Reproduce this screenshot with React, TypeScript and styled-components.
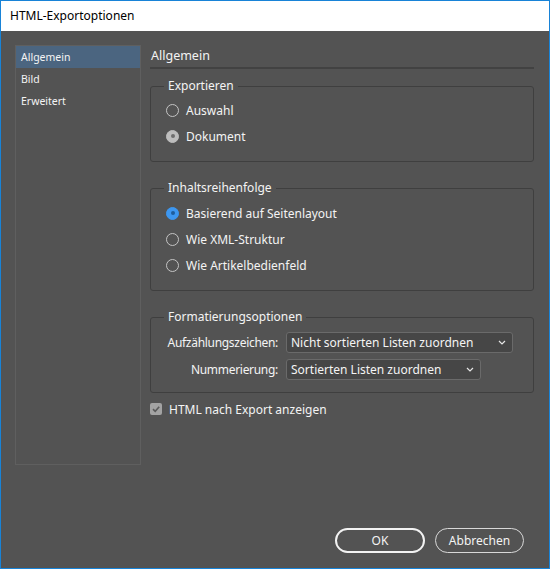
import React from "react";
import styled, { createGlobalStyle } from "styled-components";

const Global = createGlobalStyle`
  html, body { margin: 0; padding: 0; background: #ffffff; }
  * { box-sizing: border-box; }
`;

const FONT = `"Noto Sans", "Open Sans", Arial, sans-serif`;

const Window = styled.div`
  width: 550px;
  height: 569px;
  border: 1px solid #1883d7;
  display: flex;
  flex-direction: column;
  font-family: ${FONT};
`;

const TitleBar = styled.div`
  height: 30px;
  flex: none;
  background: #ffffff;
  color: #000000;
  font-size: 12px;
  display: flex;
  align-items: center;
  padding-left: 9px;
  padding-bottom: 2px;
`;

const Body = styled.div`
  flex: 1;
  background: #535353;
  padding: 14px 15px 15px 14px;
  display: flex;
  flex-direction: column;
  color: #f0f0f0;
`;

const Content = styled.div`
  display: flex;
  gap: 9px;
  flex: 1;
  align-items: flex-start;
`;

const Sidebar = styled.div`
  width: 126px;
  height: 420px;
  border: 1px solid #5f5f5f;
  display: flex;
  flex-direction: column;
`;

const NavItem = styled.div<{ $active?: boolean }>`
  height: 22px;
  display: flex;
  align-items: center;
  padding-left: 5px;
  font-size: 10.5px;
  color: #f4f4f4;
  background: ${(p) => (p.$active ? "#4b6580" : "transparent")};
`;

const Main = styled.div`
  flex: 1;
  display: flex;
  flex-direction: column;
`;

const Heading = styled.div`
  height: 24px;
  display: flex;
  align-items: center;
  padding-left: 1px;
  padding-bottom: 2px;
  font-size: 12.5px;
  color: #f4f4f4;
  border-bottom: 2px solid #424242;
`;

const Group = styled.fieldset<{ $mt: number; $h: number }>`
  margin: ${(p) => p.$mt}px 0 0 0;
  height: ${(p) => p.$h}px;
  border: 1px solid #3f3f3f;
  border-radius: 3px;
  padding: 0 14px 0 15px;
  min-width: 0;
`;

const Legend = styled.legend`
  font-size: 12px;
  color: #f4f4f4;
  padding: 0 4px;
  margin-left: -2px;
  line-height: 16px;
`;

const OptionList = styled.div<{ $pt: number }>`
  display: flex;
  flex-direction: column;
  gap: 8.3px;
  padding-top: ${(p) => p.$pt}px;
`;

const RadioRow = styled.label`
  display: flex;
  align-items: center;
  height: 18px;
  gap: 7px;
  font-size: 12px;
  color: #f4f4f4;
`;

const RadioCircle = styled.span<{ $state: "off" | "grey" | "blue" }>`
  width: 13px;
  height: 13px;
  border-radius: 50%;
  flex: none;
  position: relative;
  border: 1px solid
    ${(p) => (p.$state === "off" ? "#c4c4c4" : p.$state === "blue" ? "#3d97f0" : "#bdbdbd")};
  background: ${(p) => (p.$state === "off" ? "transparent" : p.$state === "blue" ? "#3d97f0" : "#bdbdbd")};
  &::after {
    content: "";
    display: ${(p) => (p.$state === "off" ? "none" : "block")};
    position: absolute;
    left: 3.5px;
    top: 3.5px;
    width: 4px;
    height: 4px;
    border-radius: 50%;
    background: ${(p) => (p.$state === "blue" ? "#1f5e9c" : "#6e6e6e")};
  }
`;

const FormGrid = styled.div`
  display: grid;
  grid-template-columns: 112px auto;
  grid-auto-rows: 21px;
  justify-content: start;
  column-gap: 8px;
  row-gap: 6px;
  padding-top: 7px;
  align-items: center;
`;

const FieldLabel = styled.span`
  font-size: 12px;
  letter-spacing: -0.3px;
  color: #f4f4f4;
  text-align: right;
  white-space: nowrap;
`;

const Select = styled.div<{ $w: number }>`
  width: ${(p) => p.$w}px;
  height: 21px;
  border: 1px solid #6a6a6a;
  border-radius: 3px;
  background: #464646;
  display: flex;
  align-items: center;
  justify-content: space-between;
  padding: 0 6px 0 4px;
  font-size: 12px;
  color: #f4f4f4;
`;

const CheckRow = styled.label`
  display: flex;
  align-items: center;
  gap: 7px;
  margin-top: 7px;
  margin-left: 0;
  font-size: 12px;
  color: #f4f4f4;
  height: 18px;
`;

const CheckBox = styled.span`
  width: 12px;
  height: 12px;
  border-radius: 2px;
  background: #a3a3a3;
  display: flex;
  align-items: center;
  justify-content: center;
  flex: none;
`;

const Footer = styled.div`
  display: flex;
  justify-content: flex-end;
  gap: 10px;
  padding-right: 10px;
`;

const Button = styled.button<{ $primary?: boolean; $w: number }>`
  width: ${(p) => p.$w}px;
  height: 25px;
  border-radius: 13px;
  background: transparent;
  border: ${(p) => (p.$primary ? "2px solid #f2f2f2" : "1px solid #d8d8d8")};
  color: #f4f4f4;
  font-family: ${FONT};
  font-size: 12px;
  padding: 0 0 1px;
`;

const Chevron = () => (
  <svg width="8" height="5" viewBox="0 0 8 5">
    <path d="M1 1 L4 4 L7 1" fill="none" stroke="#e6e6e6" strokeWidth="1.2" />
  </svg>
);

const Check = () => (
  <svg width="10" height="10" viewBox="0 0 10 10">
    <path d="M2 5.2 L4.2 7.3 L8.2 2.8" fill="none" stroke="#5a5a5a" strokeWidth="1.6" />
  </svg>
);

export default function App() {
  return (
    <>
      <Global />
      <Window>
        <TitleBar>HTML-Exportoptionen</TitleBar>
        <Body>
          <Content>
            <Sidebar>
              <NavItem $active>Allgemein</NavItem>
              <NavItem>Bild</NavItem>
              <NavItem>Erweitert</NavItem>
            </Sidebar>
            <Main>
              <Heading>Allgemein</Heading>
              <Group $mt={9} $h={84}>
                <Legend>Exportieren</Legend>
                <OptionList $pt={7}>
                  <RadioRow>
                    <RadioCircle $state="off" />
                    Auswahl
                  </RadioRow>
                  <RadioRow>
                    <RadioCircle $state="grey" />
                    Dokument
                  </RadioRow>
                </OptionList>
              </Group>
              <Group $mt={18} $h={111}>
                <Legend>Inhaltsreihenfolge</Legend>
                <OptionList $pt={8}>
                  <RadioRow>
                    <RadioCircle $state="blue" />
                    Basierend auf Seitenlayout
                  </RadioRow>
                  <RadioRow>
                    <RadioCircle $state="off" />
                    Wie XML-Struktur
                  </RadioRow>
                  <RadioRow>
                    <RadioCircle $state="off" />
                    Wie Artikelbedienfeld
                  </RadioRow>
                </OptionList>
              </Group>
              <Group $mt={18} $h={84}>
                <Legend>Formatierungsoptionen</Legend>
                <FormGrid>
                  <FieldLabel>Aufzählungszeichen:</FieldLabel>
                  <Select $w={227}>
                    Nicht sortierten Listen zuordnen
                    <Chevron />
                  </Select>
                  <FieldLabel>Nummerierung:</FieldLabel>
                  <Select $w={195}>
                    Sortierten Listen zuordnen
                    <Chevron />
                  </Select>
                </FormGrid>
              </Group>
              <CheckRow>
                <CheckBox>
                  <Check />
                </CheckBox>
                HTML nach Export anzeigen
              </CheckRow>
            </Main>
          </Content>
          <Footer>
            <Button $primary $w={90}>OK</Button>
            <Button $w={89}>Abbrechen</Button>
          </Footer>
        </Body>
      </Window>
    </>
  );
}
